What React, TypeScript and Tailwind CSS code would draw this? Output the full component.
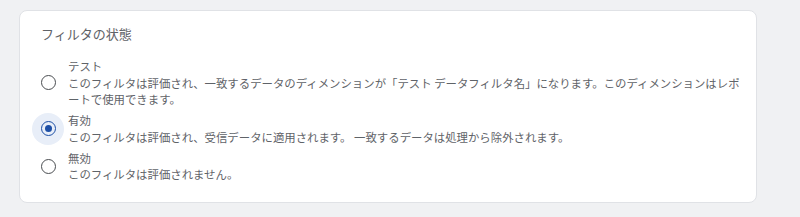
const font = { fontFamily: '"Noto Sans CJK JP", "Noto Sans", sans-serif' };

type Option = { label: string; description: string; selected?: boolean };

const options: Option[] = [
  {
    label: "テスト",
    description:
      "このフィルタは評価され、一致するデータのディメンションが「テスト データフィルタ名」になります。このディメンションはレポートで使用できます。",
  },
  {
    label: "有効",
    description: "このフィルタは評価され、受信データに適用されます。 一致するデータは処理から除外されます。",
    selected: true,
  },
  {
    label: "無効",
    description: "このフィルタは評価されません。",
  },
];

function Radio({ selected }: { selected?: boolean }) {
  return (
    <div
      className={
        "flex h-8 w-8 shrink-0 items-center justify-center rounded-full " +
        (selected ? "bg-[#e8eef8]" : "")
      }
    >
      <div
        className={
          "flex h-[15px] w-[15px] items-center justify-center rounded-full border-[1.7px] " +
          (selected ? "border-[#1d4fa6]" : "border-[#4a4d51]")
        }
      >
        {selected && <div className="h-[7px] w-[7px] rounded-full bg-[#1d4fa6]" />}
      </div>
    </div>
  );
}

export default function App() {
  return (
    <div className="min-h-[217px] bg-[#f0f1f3] pl-[19px] pt-[10px]" style={font}>
      <div className="h-[193px] w-[738px] rounded-[8px] border border-[#e0e2e6] bg-white pl-[12px] pr-[10px] pt-[15px]">
        <div className="pl-[9px] text-[13px] leading-[16px] text-[#5f6368]">フィルタの状態</div>
        <div className="mt-[16px] flex flex-col gap-[4.5px]">
          {options.map((o) => (
            <div key={o.label} className="flex items-center gap-[4px]">
              <Radio selected={o.selected} />
              <div className="flex-1 text-[11.4px] leading-[16.5px] text-[#5f6368]">
                <div>{o.label}</div>
                <div>{o.description}</div>
              </div>
            </div>
          ))}
        </div>
      </div>
    </div>
  );
}
